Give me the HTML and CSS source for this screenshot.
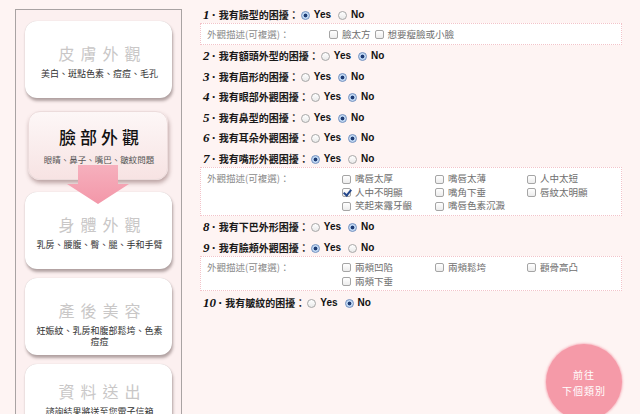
FILE: index.html
```html
<!DOCTYPE html>
<html lang="zh-Hant">
<head>
<meta charset="utf-8">
<title>臉部外觀</title>
<link rel="stylesheet" href="styles.css">
</head>
<body>
<div class="page">
  <aside class="side">
    <div class="card">
      <div class="ct">皮膚外觀</div>
      <div class="cs">美白、斑點色素、痘痘、毛孔</div>
    </div>
    <div class="card active">
      <div class="ct">臉部外觀</div>
      <div class="cs">眼睛、鼻子、嘴巴、皺紋問題</div>
    </div>
    <svg class="arrow" width="62" height="40" viewBox="0 0 62 40">
      <defs>
        <linearGradient id="ag" x1="0" y1="0" x2="0" y2="1">
          <stop offset="0" stop-color="#f6b0bd"/>
          <stop offset="1" stop-color="#f397a9"/>
        </linearGradient>
      </defs>
      <polygon points="11,0 51,0 51,19 62,19 31,39 0,19 11,19" fill="url(#ag)"/>
    </svg>
    <div class="card">
      <div class="ct">身體外觀</div>
      <div class="cs">乳房、腰腹、臀、腿、手和手臂</div>
    </div>
    <div class="card">
      <div class="ct">產後美容</div>
      <div class="cs">妊娠紋、乳房和腹部鬆垮、色素痘痘</div>
    </div>
    <div class="card last">
      <div class="ct">資料送出</div>
      <div class="cs">諮詢結果將送至您電子信箱</div>
    </div>
  </aside>

  <main class="qs">
    <div class="q"><span class="num">1<span class="dot">·</span></span><span class="qt">我有臉型的困擾：</span><span class="radio on"></span><span class="opt">Yes</span><span class="radio"></span><span class="opt">No</span></div>
    <div class="sub">
      <div class="sl short">外觀描述(可複選)：</div>
      <div class="inl">
        <span class="ck"><span class="box"></span>臉太方</span>
        <span class="ck"><span class="box"></span>想要瘦臉或小臉</span>
      </div>
    </div>
    <div class="q"><span class="num">2<span class="dot">·</span></span><span class="qt">我有額頭外型的困擾：</span><span class="radio"></span><span class="opt">Yes</span><span class="radio on"></span><span class="opt">No</span></div>
    <div class="q"><span class="num">3<span class="dot">·</span></span><span class="qt">我有眉形的困擾：</span><span class="radio"></span><span class="opt">Yes</span><span class="radio on"></span><span class="opt">No</span></div>
    <div class="q"><span class="num">4<span class="dot">·</span></span><span class="qt">我有眼部外觀困擾：</span><span class="radio"></span><span class="opt">Yes</span><span class="radio on"></span><span class="opt">No</span></div>
    <div class="q"><span class="num">5<span class="dot">·</span></span><span class="qt">我有鼻型的困擾：</span><span class="radio"></span><span class="opt">Yes</span><span class="radio on"></span><span class="opt">No</span></div>
    <div class="q"><span class="num">6<span class="dot">·</span></span><span class="qt">我有耳朵外觀困擾：</span><span class="radio"></span><span class="opt">Yes</span><span class="radio on"></span><span class="opt">No</span></div>
    <div class="q"><span class="num">7<span class="dot">·</span></span><span class="qt">我有嘴形外觀困擾：</span><span class="radio on"></span><span class="opt">Yes</span><span class="radio"></span><span class="opt">No</span></div>
    <div class="sub">
      <div class="sl">外觀描述(可複選)：</div>
      <div class="grid">
        <span class="ck"><span class="box"></span>嘴唇太厚</span>
        <span class="ck"><span class="box"></span>嘴唇太薄</span>
        <span class="ck"><span class="box"></span>人中太短</span>
        <span class="ck"><span class="box checked"></span>人中不明顯</span>
        <span class="ck"><span class="box"></span>嘴角下垂</span>
        <span class="ck"><span class="box"></span>唇紋太明顯</span>
        <span class="ck"><span class="box"></span>笑起來露牙齦</span>
        <span class="ck"><span class="box"></span>嘴唇色素沉澱</span>
      </div>
    </div>
    <div class="q"><span class="num">8<span class="dot">·</span></span><span class="qt">我有下巴外形困擾：</span><span class="radio"></span><span class="opt">Yes</span><span class="radio on"></span><span class="opt">No</span></div>
    <div class="q"><span class="num">9<span class="dot">·</span></span><span class="qt">我有臉頰外觀困擾：</span><span class="radio on"></span><span class="opt">Yes</span><span class="radio"></span><span class="opt">No</span></div>
    <div class="sub">
      <div class="sl">外觀描述(可複選)：</div>
      <div class="grid">
        <span class="ck"><span class="box"></span>兩頰凹陷</span>
        <span class="ck"><span class="box"></span>兩頰鬆垮</span>
        <span class="ck"><span class="box"></span>顴骨高凸</span>
        <span class="ck"><span class="box"></span>兩頰下垂</span>
      </div>
    </div>
    <div class="q"><span class="num">10<span class="dot">·</span></span><span class="qt">我有皺紋的困擾：</span><span class="radio"></span><span class="opt">Yes</span><span class="radio on"></span><span class="opt">No</span></div>
  </main>

  <div class="next">前往<br>下個類別</div>
</div>
</body>
</html>
```

FILE: styles.css
```css
html, body {
  margin: 0;
  padding: 0;
  background: #fef4f3;
  overflow: hidden;
}

.page {
  position: relative;
  width: 640px;
  height: 414px;
  display: flex;
  align-items: flex-start;
  font-family: "Noto Sans CJK TC", "Noto Sans", sans-serif;
}

/* ---------- sidebar ---------- */
.side {
  position: relative;
  margin: 9px 0 0 15px;
  width: 147px;
  height: 430px;
  padding: 11px 9px 0 9px;
  border: 1px solid #a9a3a3;
  border-bottom: none;
  background: #fcf0f0;
  flex: none;
}

.card {
  height: 77px;
  margin-bottom: 9px;
  box-sizing: border-box;
  border-radius: 12px;
  background: #ffffff;
  box-shadow: 1px 3px 3px rgba(60, 40, 40, 0.38), 0 0 1px rgba(0, 0, 0, 0.2);
  display: flex;
  flex-direction: column;
  align-items: center;
  justify-content: flex-start;
  padding: 22px 9px 0 11px;
  text-align: center;
}

.card.last {
  padding-top: 17px;
}

.ct {
  font-size: 16px;
  line-height: 20px;
  letter-spacing: 6px;
  margin-right: -6px;
  color: #c9c7c7;
  font-weight: 400;
}

.cs {
  margin-top: 5px;
  font-size: 9px;
  line-height: 11px;
  color: #333;
  letter-spacing: 0;
}

.card.active {
  height: 69px;
  margin: 13px 4px 12px 3px;
  padding-top: 15px;
  background: linear-gradient(#fdf7f7, #f7e3e3);
  border: 1px solid #ecdcdc;
  box-shadow: 1px 3px 4px rgba(110, 70, 70, 0.45);
}

.card.active .ct {
  color: #111;
  font-weight: 500;
  font-size: 17px;
  letter-spacing: 4px;
  margin-right: -4px;
}

.card.active .cs {
  color: #555;
  font-size: 8.5px;
  margin-top: 7px;
}

.arrow {
  position: absolute;
  left: 51px;
  top: 155px;
  z-index: 2;
}

/* ---------- questions ---------- */
.qs {
  margin-left: 18px;
  width: 422px;
  padding-top: 4px;
  flex: none;
}

.q {
  height: 20.6px;
  display: flex;
  align-items: center;
  padding-left: 3px;
  white-space: nowrap;
}

.num {
  font-family: "Liberation Serif", "DejaVu Serif", serif;
  font-style: italic;
  font-weight: bold;
  font-size: 13px;
  color: #111;
  line-height: 1;
}

.dot {
  font-style: normal;
  margin: 0 3px 0 2px;
}

.qt {
  font-size: 10px;
  font-weight: bold;
  color: #1a1a1a;
  margin-right: 2px;
}

.opt {
  font-family: "Liberation Sans", Arial, sans-serif;
  font-weight: bold;
  font-size: 10px;
  color: #111;
  margin-left: 4px;
  margin-right: 7px;
}

.radio {
  width: 9px;
  height: 9px;
  box-sizing: border-box;
  border-radius: 50%;
  border: 1px solid #a7a7a7;
  background: linear-gradient(#ffffff, #e9e9e9);
  position: relative;
  margin-top: 2px;
}

.radio.on {
  border-color: #6f8fbf;
  background: radial-gradient(circle at 50% 50%, #1e3b73 0 1.6px, #b9d2f0 2.2px, #dbe9f9 100%);
}

.sub {
  margin: -1.5px 0 0.7px 0;
  border: 1px dotted #f3c3c9;
  background: #ffffff;
  padding: 4px 6px 2px 6px;
  display: flex;
  align-items: flex-start;
  font-size: 9.5px;
  line-height: 13.5px;
}

.sl {
  width: 135px;
  flex: none;
  color: #8a8a8a;
}

.sl.short {
  width: 122px;
}

.inl {
  display: flex;
  gap: 4px;
}

.grid {
  display: grid;
  grid-template-columns: 93px 92px 80px;
}

.ck {
  display: flex;
  align-items: center;
  color: #6e6e6e;
  white-space: nowrap;
}

.box {
  width: 9px;
  height: 9px;
  box-sizing: border-box;
  border: 1px solid #a5a5a5;
  border-radius: 2px;
  background: linear-gradient(#ffffff, #ececec);
  margin-right: 4px;
  position: relative;
  flex: none;
}

.box.checked::after {
  content: "";
  position: absolute;
  left: 2px;
  top: -1px;
  width: 3px;
  height: 6px;
  border-right: 2px solid #24478a;
  border-bottom: 2px solid #24478a;
  transform: rotate(40deg);
}

/* ---------- next button ---------- */
.next {
  position: absolute;
  left: 546px;
  top: 344px;
  width: 76px;
  height: 76px;
  border-radius: 50%;
  background: #f59aa8;
  box-shadow: 0 0 2px 1px rgba(245, 154, 168, 0.6);
  color: #ffffff;
  font-size: 10px;
  line-height: 16px;
  letter-spacing: 1px;
  text-align: center;
  box-sizing: border-box;
  padding-top: 23px;
}
```
